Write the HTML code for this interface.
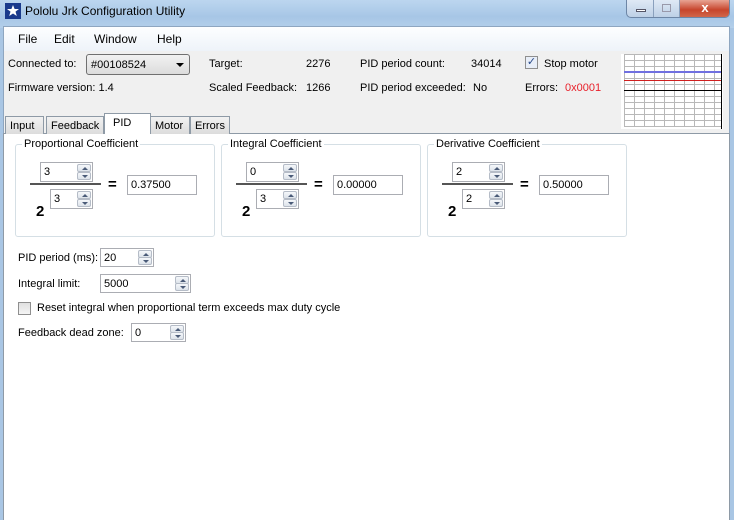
<!DOCTYPE html>
<html><head><style>
*{box-sizing:border-box}
body{margin:0;width:734px;height:520px;overflow:hidden;font-family:"Liberation Sans",sans-serif;font-size:11px;color:#000;position:relative;background:#a9c6e4}
.a{position:absolute;white-space:nowrap}
.title{left:0;top:0;width:734px;height:28px;background:linear-gradient(#bcd6ef,#a7c6e6 60%,#b3cfea)}
.frame{left:3px;top:26px;width:727px;height:494px;background:#f0f0f0;border:1px solid #8ea6c0}
.menu{left:4px;top:27px;width:725px;height:24px;background:linear-gradient(#fdfeff,#eef3f9)}
.spin{position:absolute;background:#fff;border:1px solid #abadb3;padding:2px 3px 0;font-size:11px;line-height:15px}
.spin b{position:absolute;right:1px;width:14px;background:linear-gradient(#f5f7fa,#dde3ea);border:1px solid #b5bcc7;border-radius:2px}
.spin b.u{top:1px;height:8px}.spin b.d{bottom:1px;height:8px}
.spin b:after{content:"";position:absolute;left:4px;border-left:3px solid transparent;border-right:3px solid transparent}
.spin b.u:after{top:2px;border-bottom:3px solid #4a5b78}
.spin b.d:after{top:2px;border-top:3px solid #4a5b78}
.grp{position:absolute;top:144px;width:200px;height:93px;border:1px solid #d5dfe5;border-radius:3px}
.grp .t{position:absolute;left:6px;top:-7px;background:#fff;padding:0 2px}
.tab{position:absolute;top:116px;height:18px;border:1px solid #8e9aa6;border-bottom:none;background:linear-gradient(#f2f2f2,#dcdcdc);padding:3px 4px;font-size:11px}
</style></head><body>
<div class="a title"></div>
<svg class="a" style="left:5px;top:3px" width="16" height="16"><rect width="16" height="16" fill="#1a3a8c"/><path d="M8 2l1.6 4H14l-3.5 2.6 1.3 4.4L8 10.5 4.2 13l1.3-4.4L2 6h4.4z" fill="#fff"/></svg>
<div class="a" style="left:25px;top:4px;font-size:12px">Pololu Jrk Configuration Utility</div>
<div class="a" style="left:626px;top:0;width:104px;height:18px;border:1px solid #6d86a6;border-top:none;border-radius:0 0 5px 5px;background:linear-gradient(#dfe9f5,#bdd0e6);overflow:hidden">
<div class="a" style="left:26px;top:0;width:1px;height:18px;background:#8aa0bd"></div>
<div class="a" style="left:52px;top:0;width:1px;height:18px;background:#8aa0bd"></div>
<div class="a" style="left:9px;top:9px;width:10px;height:3px;background:#fff;border:1px solid #556"></div>
<div class="a" style="left:35px;top:4px;width:9px;height:8px;border:1px solid #99a"></div>
<div class="a" style="left:53px;top:0;width:50px;height:18px;background:linear-gradient(#e8a493,#c7452c 55%,#d26b4e);color:#fff;font-weight:bold;text-align:center;font-size:13px;line-height:16px">x</div>
</div>
<div class="a frame"></div>
<div class="a menu"></div>
<div class="a" style="left:18px;top:32px;font-size:12px">File</div>
<div class="a" style="left:54px;top:32px;font-size:12px">Edit</div>
<div class="a" style="left:94px;top:32px;font-size:12px">Window</div>
<div class="a" style="left:157px;top:32px;font-size:12px">Help</div>
<div class="a" style="left:8px;top:58px">Connected to:</div>
<div class="a" style="left:86px;top:54px;width:104px;height:21px;border:1px solid #707070;border-radius:3px;background:linear-gradient(#f2f2f2,#dcdcdc);padding:4px 4px">#00108524<span class="a" style="left:89px;top:8px;border-left:4px solid transparent;border-right:4px solid transparent;border-top:4px solid #000"></span></div>
<div class="a" style="left:8px;top:82px">Firmware version: 1.4</div>
<div class="a" style="left:209px;top:58px">Target:</div><div class="a" style="left:306px;top:58px">2276</div>
<div class="a" style="left:209px;top:82px">Scaled Feedback:</div><div class="a" style="left:306px;top:82px">1266</div>
<div class="a" style="left:360px;top:58px">PID period count:</div><div class="a" style="left:471px;top:58px">34014</div>
<div class="a" style="left:360px;top:82px">PID period exceeded:</div><div class="a" style="left:473px;top:82px">No</div>
<div class="a" style="left:525px;top:56px;width:13px;height:13px;border:1px solid #8f8f8f;background:#e8eef8;color:#2a4a8a;font-size:11px;line-height:11px;text-align:center">✓</div>
<div class="a" style="left:544px;top:58px">Stop motor</div>
<div class="a" style="left:525px;top:82px">Errors:</div><div class="a" style="left:565px;top:82px;color:#e8202a">0x0001</div>
<svg class="a" style="left:621px;top:54px" width="102" height="75"><rect width="102" height="75" fill="#fff"/>
<g stroke="#b8b8b8" stroke-width="1">
<path d="M3 .5H101M3 6.5H101M3 12.5H101M3 18.5H101M3 24.5H101M3 30.5H101M3 36.5H101M3 42.5H101M3 48.5H101M3 54.5H101M3 60.5H101M3 66.5H101M3 72.5H101"/>
<path d="M3.5 0V73M13.5 0V73M23.5 0V73M33.5 0V73M43.5 0V73M53.5 0V73M63.5 0V73M73.5 0V73M83.5 0V73M93.5 0V73"/></g>
<path d="M3 18H100" stroke="#7070e0" stroke-width="2"/><path d="M3 26.5H100" stroke="#d02020"/><path d="M3 36.5H100" stroke="#000"/><path d="M100.5 0V75" stroke="#000"/></svg>
<div class="a" style="left:3px;top:133px;width:727px;height:387px;background:#fff;border:1px solid #8e9aa6;border-bottom:none"></div>
<div class="tab" style="left:5px;width:39px">Input</div>
<div class="tab" style="left:46px;width:58px">Feedback</div>
<div class="tab" style="left:150px;width:40px">Motor</div>
<div class="tab" style="left:190px;width:40px">Errors</div>
<div class="tab" style="left:104px;top:113px;height:21px;width:47px;background:#fff;padding-left:8px">PID</div>

<div class="grp" style="left:15px"><span class="t">Proportional Coefficient</span></div>
<div class="grp" style="left:221px"><span class="t">Integral Coefficient</span></div>
<div class="grp" style="left:427px"><span class="t">Derivative Coefficient</span></div>

<div class="spin" style="left:40px;top:162px;width:53px;height:20px">3<b class="u"></b><b class="d"></b></div>
<div class="a" style="left:30px;top:183px;width:71px;height:2px;background:#555"></div>
<div class="spin" style="left:50px;top:189px;width:43px;height:20px">3<b class="u"></b><b class="d"></b></div>
<div class="a" style="left:36px;top:203px;font-weight:bold;font-size:15px">2</div>
<div class="a" style="left:108px;top:176px;font-weight:bold;font-size:15px">=</div>
<div class="spin" style="left:127px;top:175px;width:70px;height:20px">0.37500</div>

<div class="spin" style="left:246px;top:162px;width:53px;height:20px">0<b class="u"></b><b class="d"></b></div>
<div class="a" style="left:236px;top:183px;width:71px;height:2px;background:#555"></div>
<div class="spin" style="left:256px;top:189px;width:43px;height:20px">3<b class="u"></b><b class="d"></b></div>
<div class="a" style="left:242px;top:203px;font-weight:bold;font-size:15px">2</div>
<div class="a" style="left:314px;top:176px;font-weight:bold;font-size:15px">=</div>
<div class="spin" style="left:333px;top:175px;width:70px;height:20px">0.00000</div>

<div class="spin" style="left:452px;top:162px;width:53px;height:20px">2<b class="u"></b><b class="d"></b></div>
<div class="a" style="left:442px;top:183px;width:71px;height:2px;background:#555"></div>
<div class="spin" style="left:462px;top:189px;width:43px;height:20px">2<b class="u"></b><b class="d"></b></div>
<div class="a" style="left:448px;top:203px;font-weight:bold;font-size:15px">2</div>
<div class="a" style="left:520px;top:176px;font-weight:bold;font-size:15px">=</div>
<div class="spin" style="left:539px;top:175px;width:70px;height:20px">0.50000</div>

<div class="a" style="left:18px;top:252px">PID period (ms):</div>
<div class="spin" style="left:100px;top:248px;width:54px;height:19px">20<b class="u"></b><b class="d"></b></div>
<div class="a" style="left:18px;top:278px">Integral limit:</div>
<div class="spin" style="left:100px;top:274px;width:91px;height:19px">5000<b class="u"></b><b class="d"></b></div>
<div class="a" style="left:18px;top:302px;width:13px;height:13px;border:1px solid #8f8f8f;background:linear-gradient(#e0e0e0,#f5f5f5)"></div>
<div class="a" style="left:37px;top:302px">Reset integral when proportional term exceeds max duty cycle</div>
<div class="a" style="left:18px;top:327px">Feedback dead zone:</div>
<div class="spin" style="left:131px;top:323px;width:55px;height:19px">0<b class="u"></b><b class="d"></b></div>
</body></html>
